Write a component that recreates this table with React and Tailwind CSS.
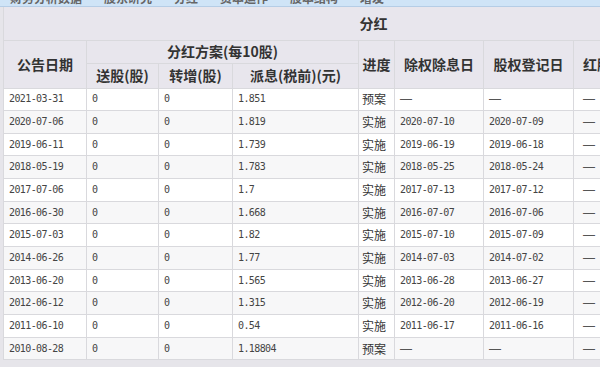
import React from "react";

const rows = [
  ["2021-03-31", "0", "0", "1.851", "预案", "—", "—", "—"],
  ["2020-07-06", "0", "0", "1.819", "实施", "2020-07-10", "2020-07-09", "—"],
  ["2019-06-11", "0", "0", "1.739", "实施", "2019-06-19", "2019-06-18", "—"],
  ["2018-05-19", "0", "0", "1.783", "实施", "2018-05-25", "2018-05-24", "—"],
  ["2017-07-06", "0", "0", "1.7", "实施", "2017-07-13", "2017-07-12", "—"],
  ["2016-06-30", "0", "0", "1.668", "实施", "2016-07-07", "2016-07-06", "—"],
  ["2015-07-03", "0", "0", "1.82", "实施", "2015-07-10", "2015-07-09", "—"],
  ["2014-06-26", "0", "0", "1.77", "实施", "2014-07-03", "2014-07-02", "—"],
  ["2013-06-20", "0", "0", "1.565", "实施", "2013-06-28", "2013-06-27", "—"],
  ["2012-06-12", "0", "0", "1.315", "实施", "2012-06-20", "2012-06-19", "—"],
  ["2011-06-10", "0", "0", "0.54", "实施", "2011-06-17", "2011-06-16", "—"],
  ["2010-08-28", "0", "0", "1.18804", "预案", "—", "—", "—"],
];

const mono = { fontFamily: '"DejaVu Sans Mono", "Liberation Mono", monospace' };

function Cell({ v, j }) {
  const isCjk = v === "实施" || v === "预案";
  const isDash = v === "—";
  if (isCjk)
    return (
      <td className="border border-[#d9d9dd] pl-[3px] text-[12px] text-[#333] font-['Noto_Sans_CJK_SC',sans-serif] leading-none">
        {v}
      </td>
    );
  if (isDash)
    return (
      <td
        className={`border border-[#d9d9dd] ${j === 7 ? "pl-[9px]" : "pl-[5px]"} text-[12px] text-[#555] font-['Liberation_Sans',sans-serif] leading-none`}
      >
        {v}
      </td>
    );
  return (
    <td
      className="border border-[#d9d9dd] pl-[5px] text-[10px] tracking-[-0.6px] text-[#444] leading-none"
      style={mono}
    >
      {v}
    </td>
  );
}

export default function App() {
  return (
    <div className="w-[600px] h-[367px] overflow-hidden bg-[#e6e5ea] font-['Noto_Sans_CJK_SC',sans-serif]">
      <div className="h-[7px] overflow-hidden bg-[#cfe4f7] border-b border-[#b5cde6]">
        <div className="-mt-[11px] flex gap-[22px] pl-[10px] text-[12px] font-bold text-[#666] whitespace-nowrap">
          <span>财务分析数据</span>
          <span>股东研究</span>
          <span>分红</span>
          <span>资本运作</span>
          <span>股本结构</span>
          <span>增发</span>
        </div>
      </div>
      <div className="pl-[3px]">
        <table className="table-fixed border-collapse w-[740px] bg-white">
          <colgroup>
            <col className="w-[83px]" />
            <col className="w-[72px]" />
            <col className="w-[74px]" />
            <col className="w-[126px]" />
            <col className="w-[36px]" />
            <col className="w-[89px]" />
            <col className="w-[90px]" />
            <col className="w-[90px]" />
            <col className="w-[80px]" />
          </colgroup>
          <thead className="bg-[#e8e6ed] text-[#333] text-[14px] font-semibold">
            <tr className="h-[33px]">
              <th colSpan={9} className="border border-[#d9d9dd] border-t-0 text-center font-semibold">
                分红
              </th>
            </tr>
            <tr className="h-[23px]">
              <th rowSpan={2} className="border border-[#d9d9dd] font-semibold">公告日期</th>
              <th colSpan={3} className="border border-[#d9d9dd] font-semibold">分红方案(每10股)</th>
              <th rowSpan={2} className="border border-[#d9d9dd] font-semibold whitespace-nowrap">进度</th>
              <th rowSpan={2} className="border border-[#d9d9dd] font-semibold whitespace-nowrap">除权除息日</th>
              <th rowSpan={2} className="border border-[#d9d9dd] font-semibold whitespace-nowrap">股权登记日</th>
              <th rowSpan={2} className="border border-[#d9d9dd] font-semibold text-left pl-[9px] whitespace-nowrap">红股上市日</th>
              <th rowSpan={2} className="border border-[#d9d9dd] font-semibold whitespace-nowrap">说明</th>
            </tr>
            <tr className="h-[25px]">
              <th className="border border-[#d9d9dd] font-semibold whitespace-nowrap">送股(股)</th>
              <th className="border border-[#d9d9dd] font-semibold whitespace-nowrap">转增(股)</th>
              <th className="border border-[#d9d9dd] font-semibold whitespace-nowrap">派息(税前)(元)</th>
            </tr>
          </thead>
          <tbody>
            {rows.map((r, i) => (
              <tr key={i} className={`h-[22.67px] ${i % 2 === 1 ? "bg-[#f7f7f8]" : "bg-white"}`}>
                {r.map((v, j) => (
                  <Cell key={j} v={v} j={j} />
                ))}
                <td className="border border-[#d9d9dd]"></td>
              </tr>
            ))}
          </tbody>
        </table>
      </div>
    </div>
  );
}
